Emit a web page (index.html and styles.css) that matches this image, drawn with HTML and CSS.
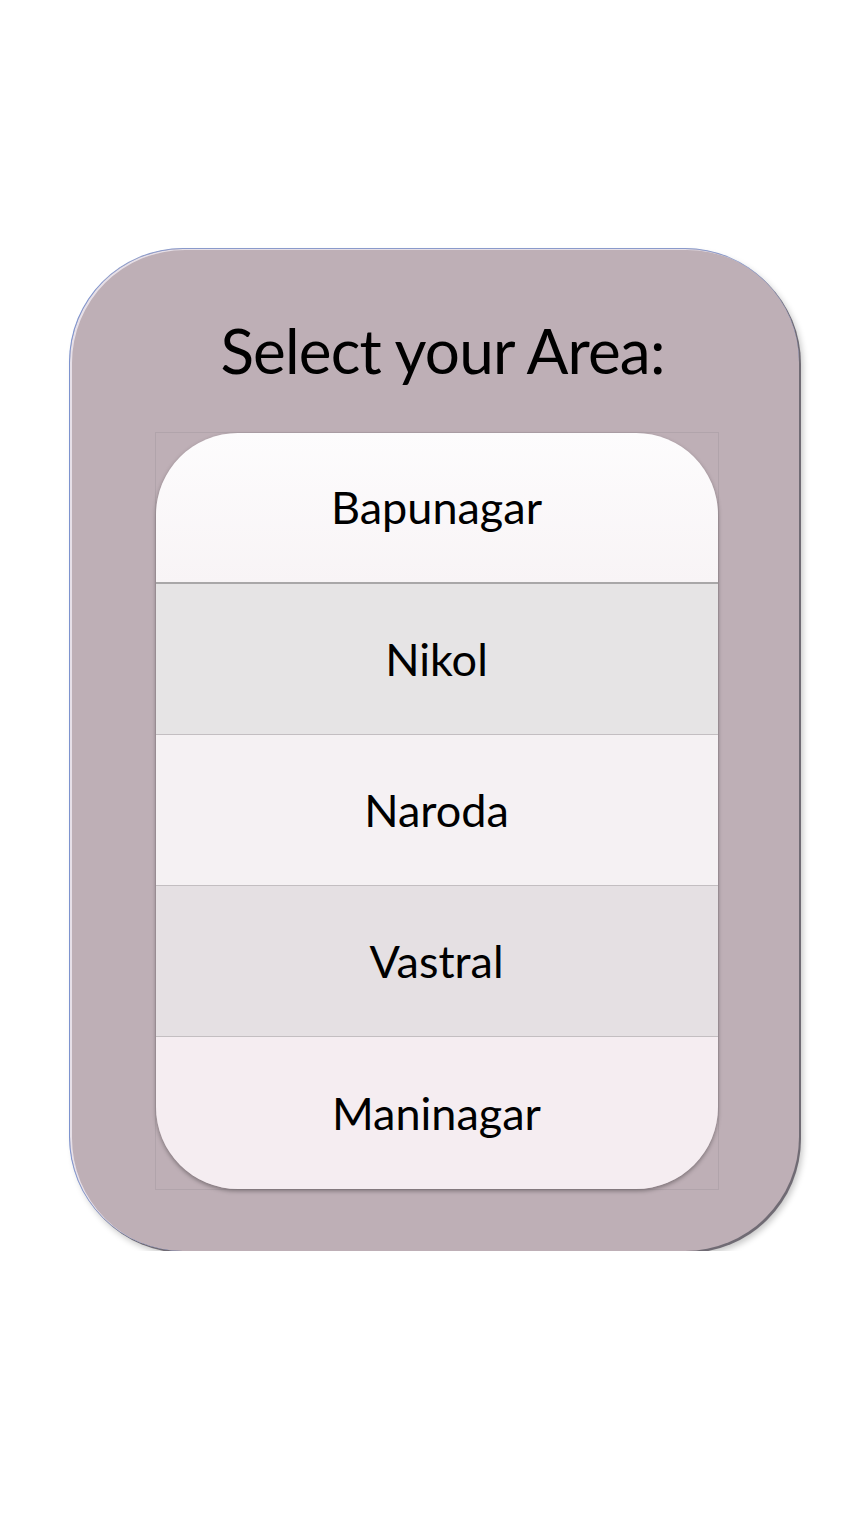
FILE: index.html
```html
<!DOCTYPE html>
<html lang="en">
<head>
<meta charset="utf-8">
<title>Select your Area</title>
<link rel="stylesheet" href="styles.css">
</head>
<body>
<main class="card">
  <h1 class="title">Select your Area:</h1>
  <div class="frame">
    <ul class="list">
      <li class="row row-1">Bapunagar</li>
      <li class="row row-2">Nikol</li>
      <li class="row row-3">Naroda</li>
      <li class="row row-4">Vastral</li>
      <li class="row row-5">Maninagar</li>
    </ul>
  </div>
</main>
</body>
</html>
```

FILE: styles.css
```css
html, body {
  margin: 0;
  padding: 0;
  background: #ffffff;
}

body {
  font-family: Lato, "Open Sans", "Liberation Sans", sans-serif;
  color: #000;
}

.card {
  box-sizing: border-box;
  margin: 248px 0 0 69px;
  width: 730px;
  height: 1003px;
  border-radius: 114px;
  background: #beafb6;
  border-left: 1px solid #7d93cf;
  border-top: 1px solid #8a9acb;
  box-shadow:
    inset 2px 1px 0 #e6dfe7,
    2px 2px 0 #706b74,
    4px 5px 6px rgba(0, 0, 0, 0.22);
  display: flex;
  flex-direction: column;
  align-items: center;
  padding-top: 69px;
}

.title {
  margin: 0 0 50px 16px;
  font-weight: 400;
  font-size: 62px;
  line-height: 64px;
  letter-spacing: -0.8px;
}

.frame {
  box-sizing: border-box;
  width: 564px;
  height: 758px;
  border: 1px solid #b1a4ab;
  margin-left: 4px;
}

.list {
  list-style: none;
  margin: 0;
  padding: 0;
  height: 100%;
  border-radius: 82px;
  overflow: hidden;
  box-shadow: 0 2px 4px rgba(0, 0, 0, 0.35);
  display: flex;
  flex-direction: column;
}

.row {
  box-sizing: border-box;
  height: 151px;
  display: flex;
  align-items: center;
  justify-content: center;
  font-size: 45px;
  line-height: 1;
  border-bottom: 1px solid #c3bec1;
}

.row-1 {
  background: linear-gradient(#fdfcfd, #f8f4f6);
  border-bottom: 2px solid #a9a7a8;
}

.row-2 { background: #e6e4e5; }
.row-3 { background: #f5f1f3; }
.row-4 { background: #e5e0e3; }
.row-5 {
  background: #f5edf1;
  border-bottom: none;
  flex: 1;
}
```
